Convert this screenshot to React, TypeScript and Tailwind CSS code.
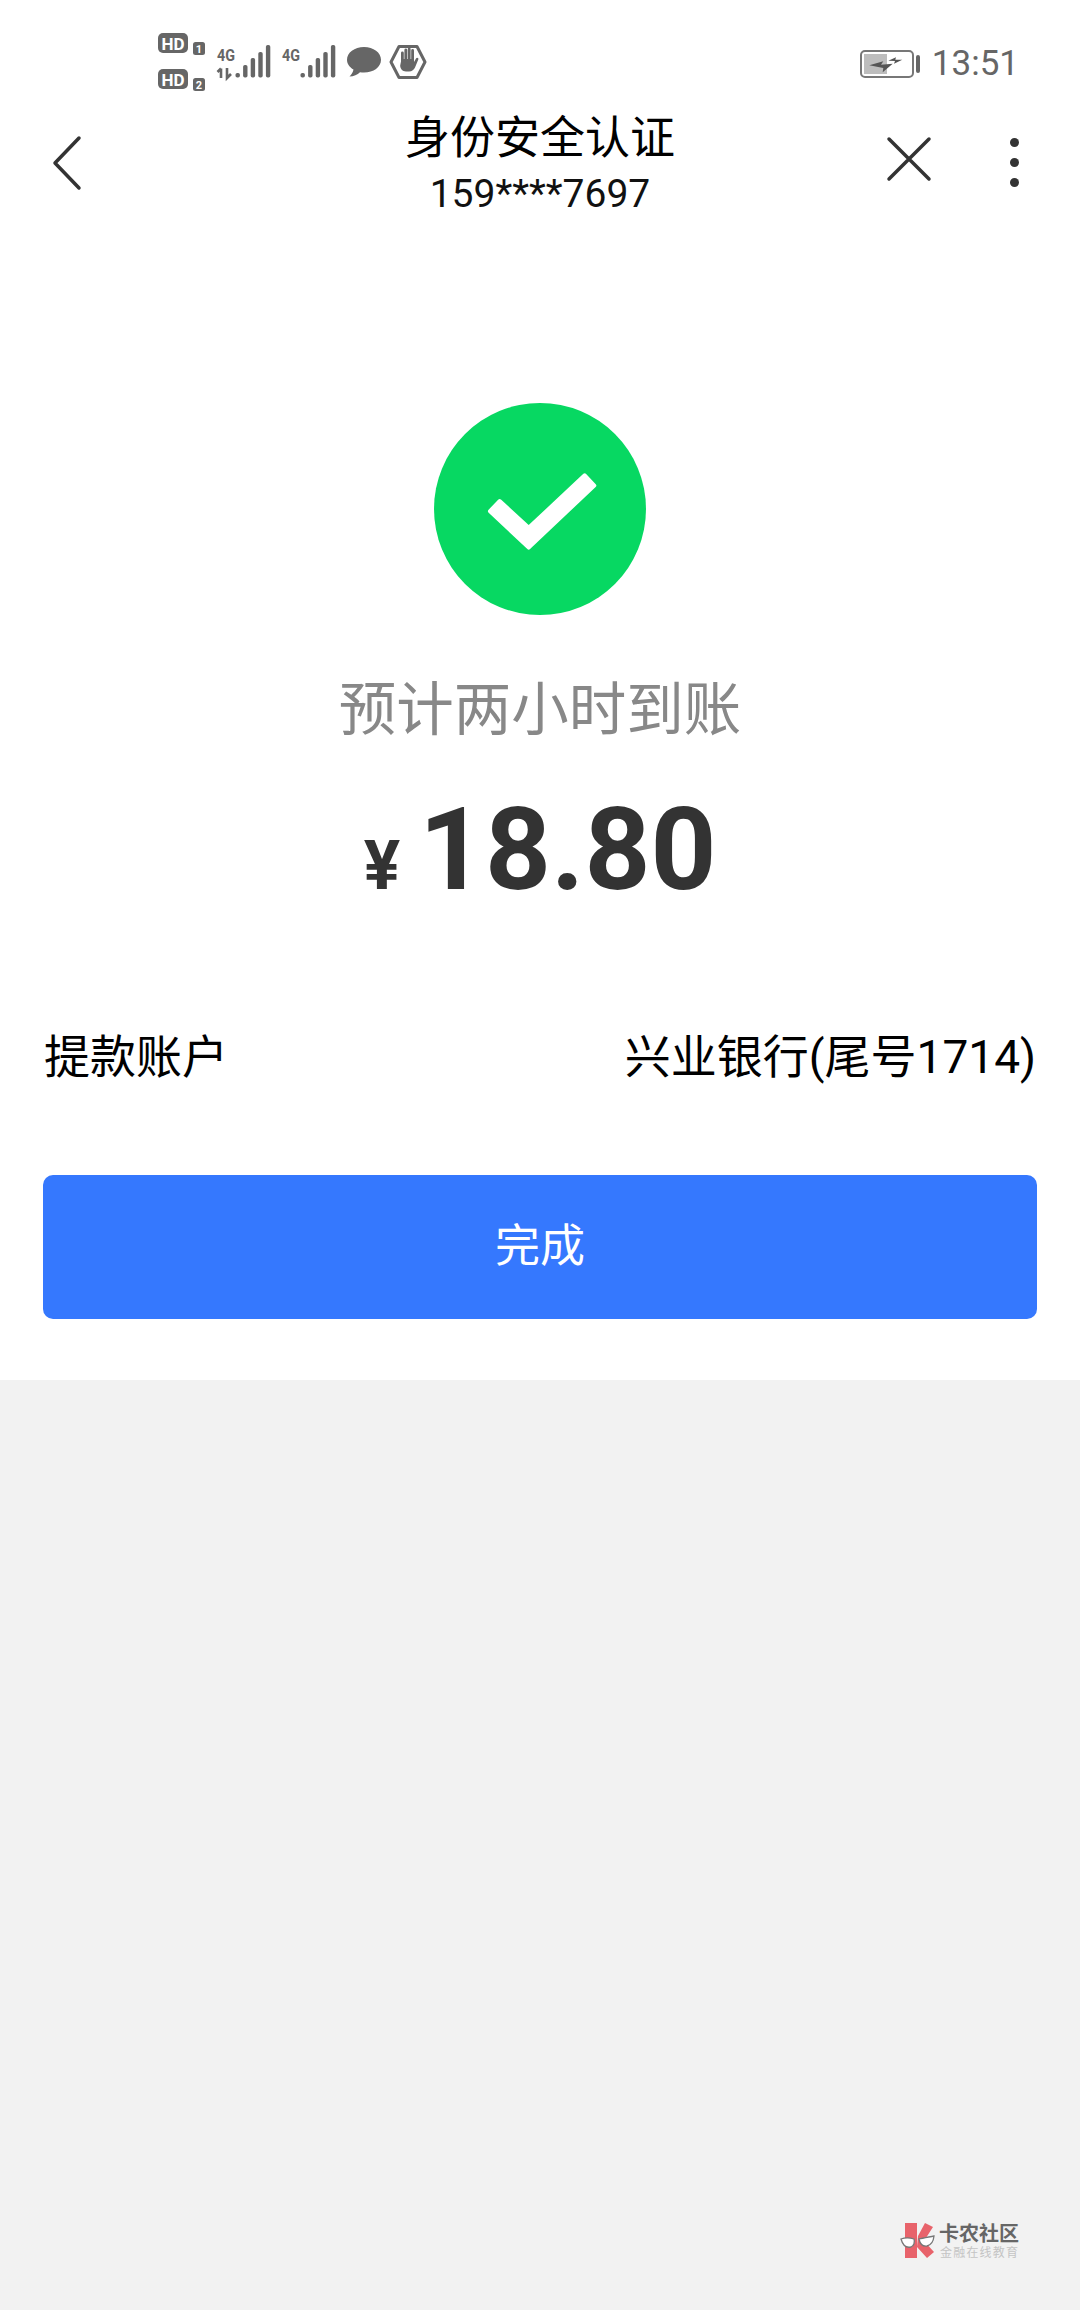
const cjk = "font-['Roboto','Noto_Sans_CJK_SC',sans-serif]";

function Bars({ x }: { x: number }) {
  const tops = [40, 32, 25, 19, 12];
  return (
    <g fill="#666">
      {tops.map((t, i) => (
        <rect key={i} x={x + i * 7.6} y={t} width={4.4} height={44.5 - t} rx={1.8} />
      ))}
    </g>
  );
}

function StatusIcons() {
  return (
    <svg width="272" height="60" viewBox="0 0 272 60" className="block">
      <rect x="0" y="0" width="30" height="20" rx="5" fill="#666" />
      <text x="15" y="16.500" textAnchor="middle" fontFamily="Roboto" fontWeight="700" fontSize="17" fill="#fff">HD</text>
      <rect x="35" y="9" width="12" height="13" rx="2.500" fill="#666" />
      <text x="41" y="20" textAnchor="middle" fontFamily="Roboto" fontWeight="700" fontSize="11" fill="#fff">1</text>
      <rect x="0" y="36" width="30" height="20" rx="5" fill="#666" />
      <text x="15" y="52.500" textAnchor="middle" fontFamily="Roboto" fontWeight="700" fontSize="17" fill="#fff">HD</text>
      <rect x="35" y="45" width="12" height="13" rx="2.500" fill="#666" />
      <text x="41" y="56" textAnchor="middle" fontFamily="Roboto" fontWeight="700" fontSize="11" fill="#fff">2</text>

      <text x="59" y="27.500" fontFamily="Roboto" fontWeight="700" fontSize="17" fill="#666" textLength="18" lengthAdjust="spacingAndGlyphs">4G</text>
      <path d="M63 35.500v9.500M59.500 39l3.500-3.500M69 35v10l4-4" stroke="#666" strokeWidth="2.600" fill="none" />
      <Bars x={77.500} />

      <text x="124" y="27.500" fontFamily="Roboto" fontWeight="700" fontSize="17" fill="#666" textLength="18" lengthAdjust="spacingAndGlyphs">4G</text>
      <Bars x={142.500} />

      <path d="M206 14c-9.500 0-17 5.500-17 12.800 0 4 2.500 7.500 6.500 9.800-.5 2.800-2 5.200-4 6.900 4.200 0 8-1.800 10.500-4.200 1.300.2 2.600.3 4 .3 9.500 0 17-5.500 17-12.800S215.500 14 206 14z" fill="#666" />

      <path d="M241 13.500h18l8 15.500-8 15.500h-18l-8-15.500z" fill="none" stroke="#666" strokeWidth="3" strokeLinejoin="round" />
      <path d="M243 28.500v-8.500a1.400 1.400 0 0 1 2.800 0V26h.6V17a1.400 1.400 0 0 1 2.800 0v9h.6V16a1.400 1.400 0 0 1 2.800 0v10h.6v-8.500a1.400 1.400 0 0 1 2.800 0V29l2-3.500c.8-1.400 3-.5 2.300 1l-3.300 8c-1 2.300-3 4-6 4h-3c-3.500 0-5.800-2.800-5.800-6z" fill="#666" />
    </svg>
  );
}

function Battery() {
  return (
    <svg width="60" height="28" viewBox="0 0 60 28" className="block">
      <rect x="1" y="1" width="52" height="26" rx="4" fill="none" stroke="#777" strokeWidth="2" />
      <rect x="4" y="4" width="23" height="20" fill="#bdbdbd" />
      <path d="M9.300 15.300L23.300 11.300L21 14.700L32.700 13.700L22.700 22.300L23.300 18Z" fill="#555" />
      <path d="M28.300 10.700L36 7.300L35.300 9.700L42.300 9.700L34 13.700L35 11Z" fill="#555" />
      <rect x="56" y="5" width="4" height="18" rx="2" fill="#666" />
    </svg>
  );
}

function Logo() {
  return (
    <div className="absolute left-[900px] top-[2222px] flex items-start gap-[4px]">
      <svg width="35" height="38" viewBox="0 0 35 38" className="block">
        <path d="M5 1h12v35H5z" fill="#e8636b" />
        <path d="M18 14L25 1L33 5L24 19L34 30L27 36L17 25Z" fill="#e8636b" />
        <path d="M1 17c4-1.500 10-1 13 0 1 3 0 7-3 8-4 1-8-1-10-8zM19 17c4-1 10-2 15-3-.5 5-3 9-7 10-4 .5-7-2-8-7z" fill="#fff" stroke="#777" strokeWidth="1.300" />
      </svg>
      <div className="flex flex-col items-start mt-[1px]">
        <span className={`text-[20px] leading-[22px] font-bold text-[#666] ${cjk}`}>卡农社区</span>
        <span className={`text-[12px] leading-[14px] mt-[1px] ml-[1px] tracking-[1.200px] text-[#c4c4c4] ${cjk}`}>金融在线教育</span>
      </div>
    </div>
  );
}

export default function App() {
  return (
    <div className={`relative w-[1080px] h-[2310px] flex flex-col bg-[#f2f2f2] ${cjk}`}>
      <div className="h-[1380px] flex flex-col bg-white">
        <div className="h-[108px] flex items-start justify-between pt-[33px] pl-[158px] pr-[61px]">
          <StatusIcons />
          <div className="flex items-center gap-[12px] mt-[15px]">
            <Battery />
            <span className="text-[35px] leading-[32px] text-[#666]">13:51</span>
          </div>
        </div>

        <div className="h-[110px] grid grid-cols-[1fr_auto_1fr] items-center">
          <div className="pl-[51px] flex items-center">
            <svg width="32" height="56" viewBox="0 0 32 56" className="block">
              <path d="M28 3 L4 28 L28 53" fill="none" stroke="#333" strokeWidth="3.500" strokeLinecap="round" strokeLinejoin="round" />
            </svg>
          </div>
          <div className="flex flex-col items-center pt-[3px]">
            <span className="text-[45px] leading-[54px] text-black">身份安全认证</span>
            <span className="text-[39px] leading-[46px] mt-[5px] text-[#111]">159****7697</span>
          </div>
          <div className="flex items-center justify-end pr-[61px] gap-[78px]">
            <svg width="46" height="46" viewBox="0 0 46 46" className="block mb-[9px]">
              <path d="M3 3 L43 43 M43 3 L3 43" fill="none" stroke="#333" strokeWidth="3.500" strokeLinecap="round" />
            </svg>
            <div className="flex flex-col gap-[11px] mb-[2px]">
              <div className="w-[9px] h-[9px] rounded-full bg-[#333]" />
              <div className="w-[9px] h-[9px] rounded-full bg-[#333]" />
              <div className="w-[9px] h-[9px] rounded-full bg-[#333]" />
            </div>
          </div>
        </div>

        <div className="mt-[185px] self-center w-[212px] h-[212px] rounded-full bg-[#07d862] flex items-center justify-center">
          <svg width="212" height="212" viewBox="434 403 212 212" className="block">
            <polygon points="499.600,501 528.700,527.800 584.700,475.300 594.300,485.500 528.700,547.600 490,511.200" fill="#fff" stroke="#fff" strokeWidth="4" strokeLinejoin="round" />
          </svg>
        </div>

        <div className="mt-[60px] text-center text-[57.500px] leading-[72px] text-[#888]">预计两小时到账</div>

        <div className="mt-[43px] flex items-baseline justify-center gap-[19px] text-[#333] font-bold">
          <span className="text-[68px] leading-[120px]">¥</span>
          <span className="text-[115px] leading-[120px]">18.80</span>
        </div>

        <div className="mt-[101px] px-[44px] flex justify-between items-center text-[46px] leading-[60px] text-black">
          <span>提款账户</span>
          <span>兴业银行(尾号1714)</span>
        </div>

        <div className="mt-[88px] mx-[43px] h-[144px] rounded-[10px] bg-[#3578fe] flex items-center justify-center text-[45px] text-white">
          完成
        </div>
      </div>
      <Logo />
    </div>
  );
}
